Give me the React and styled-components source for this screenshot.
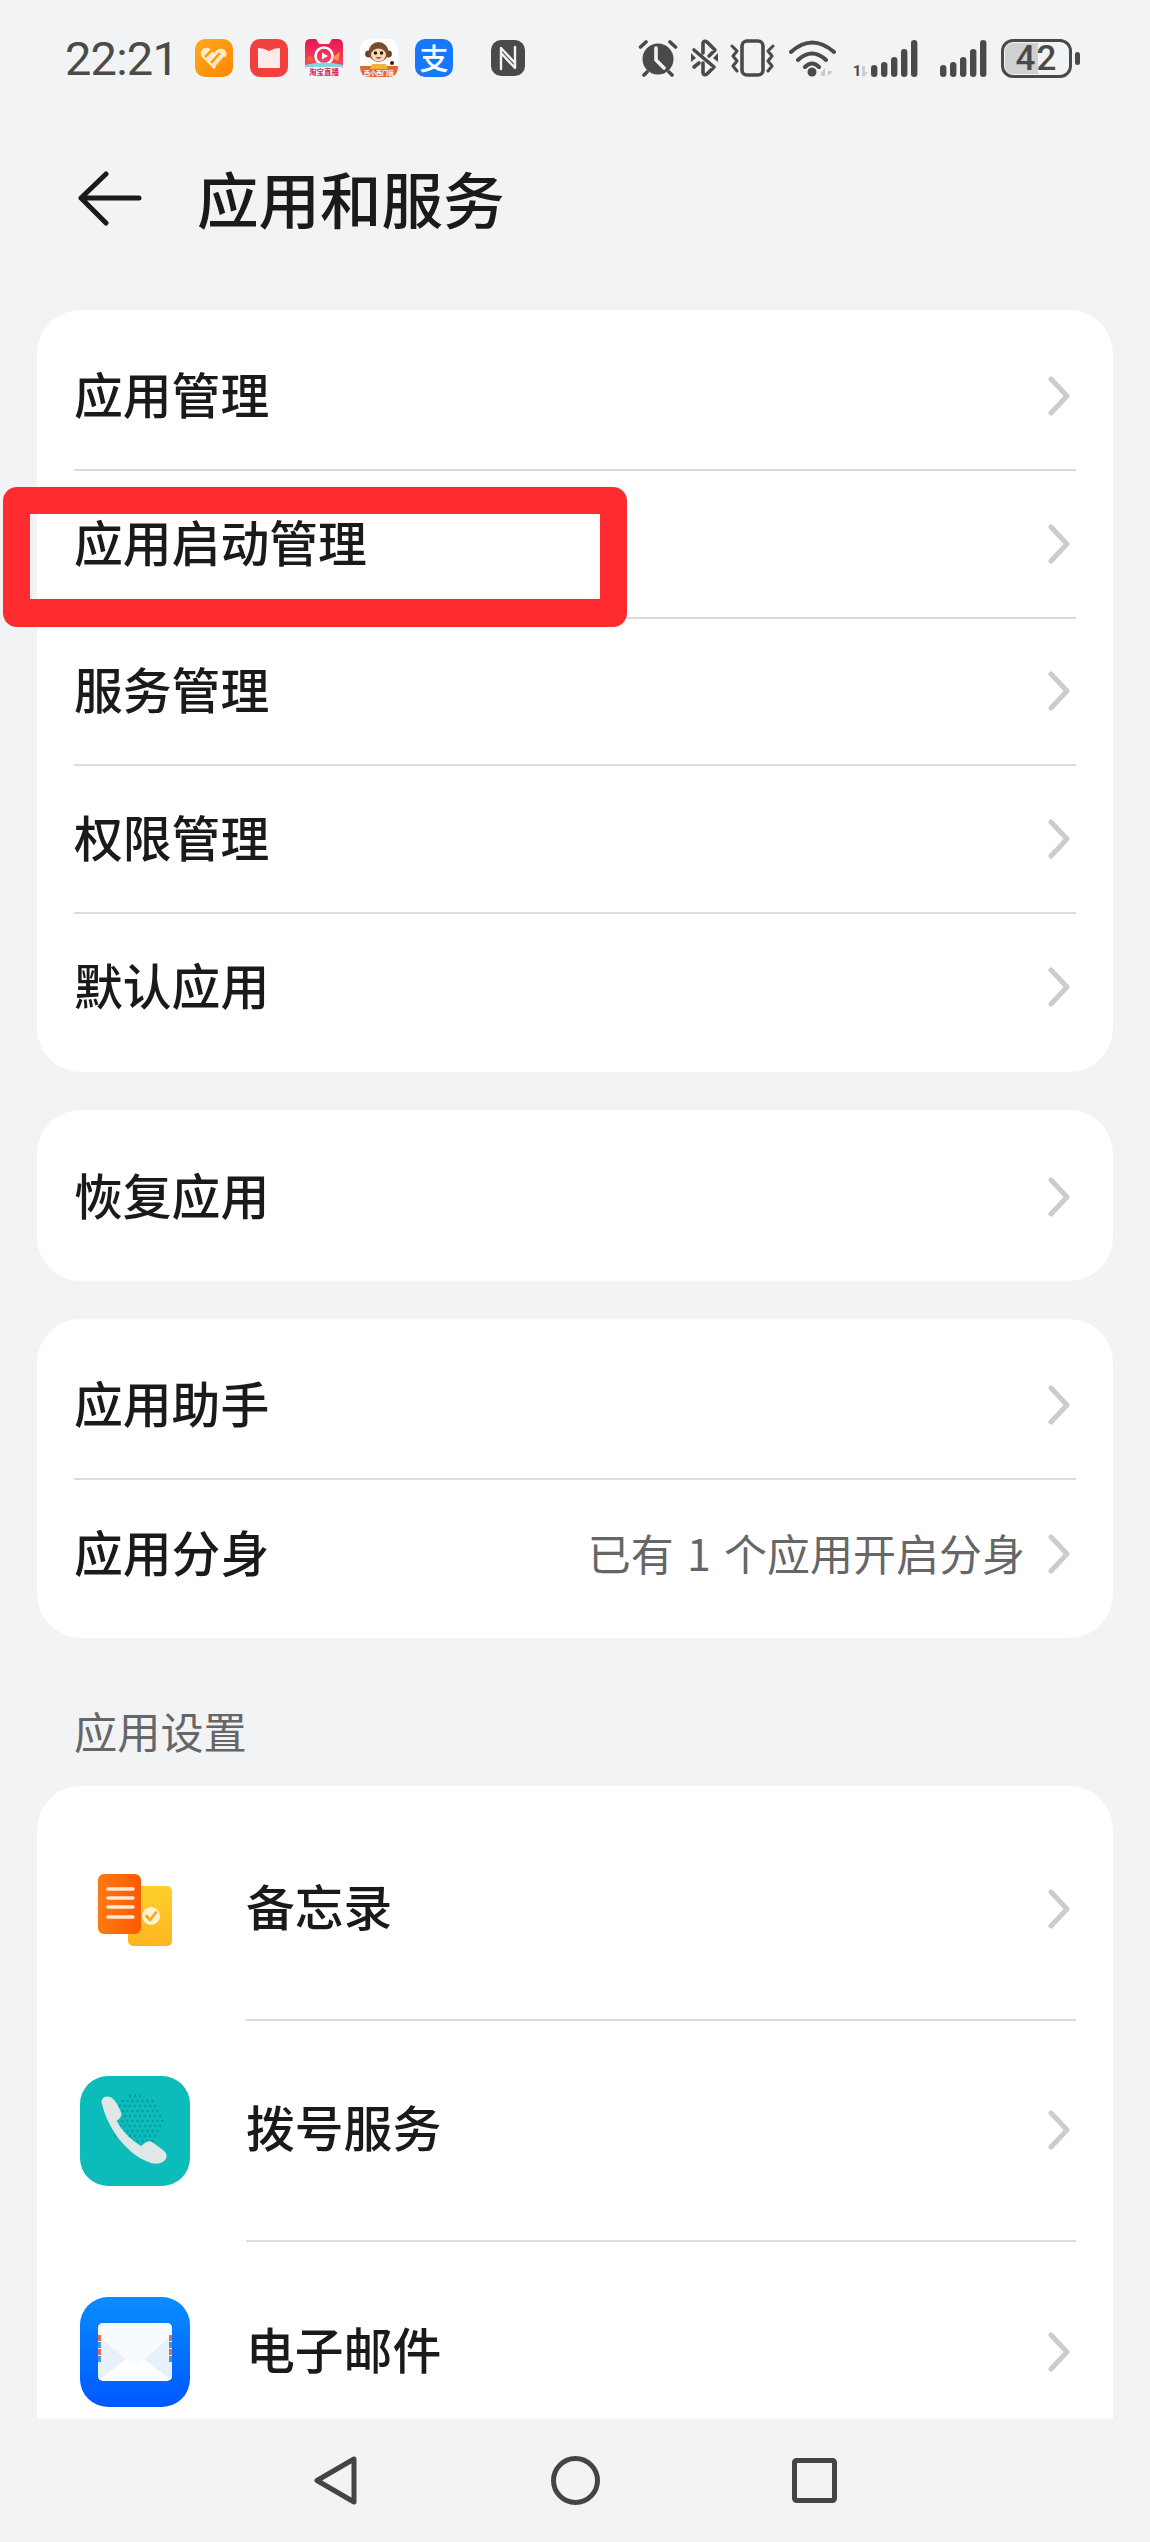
import React from 'react';
import styled, { createGlobalStyle } from 'styled-components';

const GlobalStyle = createGlobalStyle`
  html, body { margin: 0; padding: 0; background: #f1f3f5; }
  body { font-family: "Noto Sans CJK SC", "Noto Sans", sans-serif; }
`;

const INK = '#4a4a4a';

const Page = styled.div`
  width: 1150px;
  height: 2542px;
  display: flex;
  flex-direction: column;
  background: #f2f3f5;
  overflow: hidden;
  color: #1a1a1a;
`;

const StatusBar = styled.header`
  flex: none;
  height: 116px;
  display: flex;
  align-items: center;
  padding: 0 65px;
`;

const Clock = styled.span`
  font-family: Roboto, "Liberation Sans", sans-serif;
  font-size: 47px;
  letter-spacing: -0.8px;
  color: ${INK};
  width: 130px;
`;

const Notices = styled.div`
  display: flex;
  align-items: center;
  gap: 17px;
`;

const Indicators = styled.div`
  margin-left: auto;
  margin-right: 5px;
  display: flex;
  align-items: center;
`;

const Glyph = styled.svg`
  display: block;
  flex: none;
  margin-left: ${(p) => p.$gap || 0}px;
`;

const AlipayBadge = styled.span`
  width: 38px;
  height: 38px;
  border-radius: 10px;
  background: #1677ff;
  color: #fff;
  font-size: 29px;
  font-weight: 500;
  line-height: 36px;
  text-align: center;
`;

const Battery = styled.div`
  position: relative;
  width: 71px;
  height: 39px;
  margin-left: 14px;
  margin-right: 8px;
  box-sizing: border-box;
  border: 3.5px solid ${INK};
  border-radius: 12px;
  display: flex;
  align-items: center;
  justify-content: center;
  font-family: Roboto, "Liberation Sans", sans-serif;
  font-size: 35px;
  font-weight: 500;
  color: ${INK};
  &::after {
    content: '';
    position: absolute;
    right: -11px;
    top: 10px;
    width: 5px;
    height: 13px;
    border-radius: 3px;
    background: ${INK};
  }
`;

const BatteryLevel = styled.i`
  position: absolute;
  left: 1px;
  top: 1px;
  bottom: 1px;
  border-radius: 8px 0 0 8px;
  background: #cfd0d1;
`;

const BatteryText = styled.span`
  position: relative;
  letter-spacing: 1px;
`;

const Header = styled.div`
  flex: none;
  height: 168px;
  margin-bottom: 26px;
  display: flex;
  align-items: center;
  padding-left: 78px;
`;

const Title = styled.h1`
  margin: 0 0 5px 55px;
  font-size: 61.5px;
  font-weight: 500;
  line-height: 1;
  color: #1a1a1a;
`;

const Scroll = styled.main`
  flex: 1;
  min-height: 0;
  overflow: hidden;
  padding: 0 37px;
`;

const Card = styled.section`
  position: relative;
  background: #fff;
  border-radius: 44px;
  padding: 13.5px 0 10.5px;
  margin-bottom: 38px;
`;

const Row = styled.div`
  position: relative;
  display: flex;
  align-items: center;
  box-sizing: border-box;
  height: 147.5px;
  margin: 0 37px;
  padding-right: 6px;
  &:not(:last-child) {
    border-bottom: 2px solid #dcdcdc;
  }
`;

const Label = styled.span`
  font-size: 48.8px;
  font-weight: 500;
  line-height: 1;
  margin-bottom: ${(p) => p.$lift || 5}px;
`;

const Value = styled.span`
  margin-left: auto;
  margin-right: 23px;
  margin-bottom: 2px;
  font-size: 43px;
  line-height: 1;
  color: #666;
  word-spacing: 3.5px;
`;

const Chevron = styled.svg`
  display: block;
  flex: none;
  margin-left: ${(p) => (p.$alone ? 'auto' : '0')};
`;

const Highlight = styled.div`
  position: absolute;
  left: -71px;
  top: 16px;
  width: 624px;
  height: 140px;
  box-sizing: border-box;
  border: solid #fe2c2f;
  border-width: 27px 27px 28px 27px;
  border-radius: 14px;
  pointer-events: none;
`;

const SectionTitle = styled.h2`
  margin: -38px 0 0;
  height: 148px;
  box-sizing: border-box;
  padding: 69px 0 0 37px;
  font-size: 43.2px;
  font-weight: 400;
  line-height: 46px;
  color: #666;
`;

const AppCard = styled(Card)`
  margin-bottom: 0;
  padding-bottom: 40px;
`;

const AppRow = styled.div`
  display: flex;
  align-items: center;
  height: 221px;
  padding-left: 43px;
`;

const AppIcon = styled.svg`
  display: block;
  flex: none;
  margin-right: 56px;
`;

const AppBody = styled.div`
  flex: 1;
  align-self: stretch;
  box-sizing: border-box;
  display: flex;
  align-items: center;
  margin-right: 37px;
  padding-right: 6px;
  border-bottom: ${(p) => (p.$last ? 'none' : '2px solid #dcdcdc')};
`;

const BottomNav = styled.nav`
  flex: none;
  height: 123px;
  display: flex;
  align-items: center;
  justify-content: center;
  background: #f1f3f5;
`;

const NavIcon = styled.svg`
  display: block;
  flex: none;
  margin-left: ${(p) => p.$gap || 0}px;
`;

const Arrow = () => (
  <svg width="64" height="58" viewBox="0 0 64 58" fill="none" stroke="#1a1a1a" strokeWidth="5" strokeLinecap="round" strokeLinejoin="round">
    <path d="M28 3 L3 27 L28 52 M3 27 H61" />
  </svg>
);

const More = ({ alone }) => (
  <Chevron $alone={alone} width="22" height="40" viewBox="0 0 22 40" fill="none" stroke="#cccccc" strokeWidth="5" strokeLinecap="round" strokeLinejoin="round">
    <path d="M3 3 L19 20 L3 37" />
  </Chevron>
);

const HealthIcon = () => (
  <Glyph width="38" height="38" viewBox="0 0 38 38">
    <defs>
      <linearGradient id="hg" x1="0" y1="0" x2="1" y2="1">
        <stop offset="0" stopColor="#ffab1f" />
        <stop offset="1" stopColor="#ff8500" />
      </linearGradient>
    </defs>
    <rect width="38" height="38" rx="10" fill="url(#hg)" />
    <path d="M19 30 L7 18 C3 12 10 6 15 10 L19 14 C24 6 34 10 31 18 Z" fill="#ffeccb" />
    <path d="M10 18 L17 11 M16 24 L25 14 M21 28 L30 18" stroke="#ff9a10" strokeWidth="2.6" fill="none" />
  </Glyph>
);

const BookIcon = () => (
  <Glyph width="38" height="38" viewBox="0 0 38 38">
    <rect width="38" height="38" rx="10" fill="#f2403f" />
    <path d="M8 9 Q14 9 19 12 Q24 9 30 9 V29 H8 Z" fill="#fdeaea" />
  </Glyph>
);

const LiveIcon = () => (
  <Glyph width="38" height="38" viewBox="0 0 38 38">
    <defs>
      <linearGradient id="lg" x1="0" y1="0" x2="0" y2="1">
        <stop offset="0" stopColor="#e3164f" />
        <stop offset="1" stopColor="#ff4a6a" />
      </linearGradient>
    </defs>
    <path d="M5 0 H11 L14 5 H24 L27 0 H33 Q38 0 38 6 V28 H0 V6 Q0 0 5 0 Z" fill="url(#lg)" />
    <circle cx="19" cy="17" r="8.5" fill="none" stroke="#fff" strokeWidth="2.6" />
    <path d="M17 13.5 L23 17 L17 20.5 Z" fill="#fff" />
    <path d="M27 19 L35 13 L33 22 Z" fill="#f6a13a" />
    <circle cx="5" cy="20" r="3" fill="#e8613a" />
    <path d="M0 26 Q19 21 38 26 V29 H0 Z" fill="#7fd8e0" />
    <rect y="28" width="38" height="10" rx="3" fill="#fdf3f6" />
    <text x="19" y="36" textAnchor="middle" fontSize="7.5" fontWeight="700" fill="#d61f57" fontFamily="'Noto Sans CJK SC', sans-serif">淘宝直播</text>
  </Glyph>
);

const MonkeyIcon = () => (
  <Glyph width="38" height="38" viewBox="0 0 38 38">
    <rect width="38" height="38" rx="10" fill="#fff" />
    <path d="M0 27 H38 V28 Q38 38 28 38 H10 Q0 38 0 28 Z" fill="#e06a2c" />
    <path d="M12 25 L26 25 L28 30 H10 Z" fill="#f2b33a" />
    <circle cx="8.5" cy="15" r="3.4" fill="#6e4325" />
    <circle cx="28.5" cy="15" r="3.4" fill="#6e4325" />
    <circle cx="18.5" cy="13" r="10" fill="#7a4c2b" />
    <ellipse cx="18.5" cy="16" rx="7.5" ry="6.5" fill="#f6d9b8" />
    <circle cx="15.5" cy="14" r="1.7" fill="#26160c" />
    <circle cx="21.5" cy="14" r="1.7" fill="#26160c" />
    <path d="M15.5 18 Q18.5 22 21.5 18 Z" fill="#d6423a" />
    <circle cx="32" cy="24" r="2" fill="#332016" />
    <text x="19" y="35.5" textAnchor="middle" fontSize="6" fontWeight="700" fill="#fff" fontFamily="'Noto Sans CJK SC', sans-serif">西小西门装</text>
  </Glyph>
);

const NfcIcon = () => (
  <Glyph $gap="21" width="34" height="36" viewBox="0 0 34 36">
    <rect width="34" height="36" rx="10" fill={INK} />
    <path d="M10 29 V8 L24 23 M24 7 V28 L10 13" fill="none" stroke="#f2f3f5" strokeWidth="2.4" strokeLinecap="round" strokeLinejoin="round" />
  </Glyph>
);

const AlarmIcon = () => (
  <Glyph width="40" height="38" viewBox="0 0 40 38">
    <circle cx="20" cy="20" r="15.5" fill={INK} />
    <path d="M18 9 V21 L26 29" fill="none" stroke="#f2f3f5" strokeWidth="3.6" strokeLinecap="round" strokeLinejoin="round" />
    <path d="M2.5 8 L8 3 M32 3 L37.5 8 M6 36 L9 33 M34 36 L31 33" fill="none" stroke={INK} strokeWidth="3.6" strokeLinecap="round" />
  </Glyph>
);

const BluetoothIcon = () => (
  <Glyph $gap="13" width="27" height="38" viewBox="0 0 27 38">
    <path d="M3 11 L23 28 L16 35 Q13 37 12 34 V24 M12 14 V4 Q13 1 16 3 L24 11 L18 17 M3 28 L8 24" fill="none" stroke={INK} strokeWidth="3.6" strokeLinecap="round" strokeLinejoin="round" />
    <path d="M0 14 L5 19 L0 23 Z M27 14 L22 19 L27 23 Z" fill={INK} />
  </Glyph>
);

const VibrateIcon = () => (
  <Glyph $gap="12" width="45" height="38" viewBox="0 0 45 38">
    <rect x="12" y="2" width="21" height="34" rx="5" fill="none" stroke={INK} strokeWidth="3.6" />
    <path d="M2 7 L7 12 L3 17 L7 22 L3 27 L7 32 M43 7 L38 12 L42 17 L38 22 L42 27 L38 32" fill="none" stroke={INK} strokeWidth="3" strokeLinecap="round" strokeLinejoin="round" />
  </Glyph>
);

const WifiIcon = () => (
  <Glyph $gap="14" width="47" height="38" viewBox="0 0 47 38">
    <path d="M2 13 Q23 -6 45 13 M9 21 Q23 8 37 21 M16 28 Q23 21 30 28" fill="none" stroke={INK} strokeWidth="4" strokeLinecap="round" />
    <circle cx="23" cy="33" r="4.5" fill={INK} />
    <path d="M32 34 L36 29 V37 H32 Z M39 29 V37 L44 32 H39 Z" fill="#c9c9c9" />
  </Glyph>
);

const BAR_TOPS = [25, 22, 17, 9, 0];

const Bars = ({ first }) =>
  BAR_TOPS.map((top, i) => (
    <rect key={top} x={first + i * 10} y={top} width="6.4" height={37 - top} rx="3.2" fill={INK} />
  ));

const SignalOne = () => (
  <Glyph $gap="15" width="67" height="37" viewBox="0 0 67 37">
    <text x="6" y="36" textAnchor="middle" fontSize="15" fontWeight="700" fill={INK} fontFamily="Roboto, sans-serif">1</text>
    <path d="M11 26 H14 V32 H17 L13 37 L11 36 Z" fill="#cfcfcf" />
    <Bars first={20} />
  </Glyph>
);

const SignalTwo = () => (
  <Glyph $gap="22" width="47" height="37" viewBox="0 0 47 37">
    <Bars first={0} />
  </Glyph>
);

const BackIcon = () => (
  <NavIcon width="43" height="49" viewBox="0 0 43 49" fill="none" stroke="#444" strokeWidth="5" strokeLinejoin="round">
    <path d="M40 3 V46 L3 24.5 Z" />
  </NavIcon>
);

const HomeIcon = () => (
  <NavIcon $gap="194" width="49" height="49" viewBox="0 0 49 49" fill="none" stroke="#444" strokeWidth="5">
    <circle cx="24.5" cy="24.5" r="22" />
  </NavIcon>
);

const RecentIcon = () => (
  <NavIcon $gap="192" width="45" height="45" viewBox="0 0 45 45" fill="none" stroke="#444" strokeWidth="5" strokeLinejoin="round">
    <rect x="2.5" y="2.5" width="40" height="40" rx="2" />
  </NavIcon>
);

const MemoIcon = () => (
  <AppIcon width="110" height="110" viewBox="0 0 110 110">
    <defs>
      <linearGradient id="my" x1="0" y1="0" x2="0" y2="1">
        <stop offset="0" stopColor="#ffd02a" />
        <stop offset="1" stopColor="#ffb41f" />
      </linearGradient>
      <linearGradient id="mo" x1="0" y1="0" x2="1" y2="0">
        <stop offset="0" stopColor="#ff7a12" />
        <stop offset="1" stopColor="#ff5a00" />
      </linearGradient>
    </defs>
    <rect x="48" y="31" width="44" height="60" rx="5" fill="url(#my)" />
    <rect x="18" y="19" width="43" height="60" rx="6" fill="url(#mo)" />
    <path d="M28 34 H53 M28 43 H53 M28 52 H53 M28 62 H53" stroke="#ffe9d6" strokeWidth="3.4" strokeLinecap="round" />
    <circle cx="71" cy="61" r="9" fill="#fff3cf" />
    <path d="M66.5 61 L70 65 L76 57.5" fill="none" stroke="#f7a91c" strokeWidth="2.8" strokeLinecap="round" strokeLinejoin="round" />
  </AppIcon>
);

const DIALER_DOTS = [];
for (let y = 20; y <= 70; y += 5) {
  for (let x = 30; x <= 82; x += 5) {
    const d = Math.hypot(x - 56, y - 45);
    if (d < 26) DIALER_DOTS.push([x + ((y / 5) % 2) * 2.5, y]);
  }
}

const DialIcon = () => (
  <AppIcon width="110" height="110" viewBox="0 0 110 110">
    <rect width="110" height="110" rx="28" fill="#0bbcba" />
    {DIALER_DOTS.map(([x, y]) => (
      <circle key={`${x}-${y}`} cx={x} cy={y} r="1.2" fill="#069a98" />
    ))}
    <path d="M22 28 C20 23 25 19 30 21 C33 22 35 25 37 28 L41 36 C42 39 41 41 39 43 L37 45 C41 54 50 63 61 70 L65 67 C67 65 70 65 72 66 L83 74 C87 77 88 82 84 85 C79 89 72 88 66 85 C48 77 29 56 22 28 Z" fill="#dfe7e7" />
  </AppIcon>
);

const MailIcon = () => (
  <AppIcon width="110" height="110" viewBox="0 0 110 110">
    <defs>
      <linearGradient id="mb" x1="0" y1="0" x2="0" y2="1">
        <stop offset="0" stopColor="#0a8cff" />
        <stop offset="1" stopColor="#0058ff" />
      </linearGradient>
      <clipPath id="env">
        <rect x="18" y="26" width="74" height="58" rx="5" />
      </clipPath>
    </defs>
    <rect width="110" height="110" rx="28" fill="url(#mb)" />
    <g clipPath="url(#env)">
      <rect x="18" y="26" width="74" height="58" fill="#fff" />
      <path d="M18 38 L46 62 L18 84 Z M92 38 L64 62 L92 84 Z" fill="#e8f0fa" />
      <path d="M18 26 H92 V38 L60 66 Q55 70 50 66 L18 38 Z" fill="#f8fbfe" />
      <path d="M18 38 H21 V44 H18 Z M89 38 H92 V44 H89 Z M18 52 H21 V58 H18 Z M89 52 H92 V58 H89 Z" fill="#e8694f" />
      <path d="M18 45 H21 V51 H18 Z M89 45 H92 V51 H89 Z M18 59 H21 V65 H18 Z M89 59 H92 V65 H89 Z" fill="#4f8fe0" />
    </g>
  </AppIcon>
);

const PLAIN_ROWS = ['服务管理', '权限管理', '默认应用'];

export default function App() {
  return (
    <Page>
      <GlobalStyle />
      <StatusBar>
        <Clock>22:21</Clock>
        <Notices>
          <HealthIcon />
          <BookIcon />
          <LiveIcon />
          <MonkeyIcon />
          <AlipayBadge>支</AlipayBadge>
          <NfcIcon />
        </Notices>
        <Indicators>
          <AlarmIcon />
          <BluetoothIcon />
          <VibrateIcon />
          <WifiIcon />
          <SignalOne />
          <SignalTwo />
          <Battery>
            <BatteryLevel style={{ width: `${(42 / 100) * 120}%` }} />
            <BatteryText>42</BatteryText>
          </Battery>
        </Indicators>
      </StatusBar>

      <Header>
        <Arrow />
        <Title>应用和服务</Title>
      </Header>

      <Scroll>
        <Card>
          <Row>
            <Label>应用管理</Label>
            <More alone />
          </Row>
          <Row>
            <Label>应用启动管理</Label>
            <More alone />
            <Highlight />
          </Row>
          {PLAIN_ROWS.map((name) => (
            <Row key={name}>
              <Label>{name}</Label>
              <More alone />
            </Row>
          ))}
        </Card>

        <Card>
          <Row>
            <Label>恢复应用</Label>
            <More alone />
          </Row>
        </Card>

        <Card>
          <Row>
            <Label>应用助手</Label>
            <More alone />
          </Row>
          <Row>
            <Label>应用分身</Label>
            <Value>已有 1 个应用开启分身</Value>
            <More />
          </Row>
        </Card>

        <SectionTitle>应用设置</SectionTitle>

        <AppCard>
          <AppRow>
            <MemoIcon />
            <AppBody>
              <Label $lift={8}>备忘录</Label>
              <More alone />
            </AppBody>
          </AppRow>
          <AppRow>
            <DialIcon />
            <AppBody>
              <Label $lift={8}>拨号服务</Label>
              <More alone />
            </AppBody>
          </AppRow>
          <AppRow>
            <MailIcon />
            <AppBody $last>
              <Label $lift={8}>电子邮件</Label>
              <More alone />
            </AppBody>
          </AppRow>
        </AppCard>
      </Scroll>

      <BottomNav>
        <BackIcon />
        <HomeIcon />
        <RecentIcon />
      </BottomNav>
    </Page>
  );
}
